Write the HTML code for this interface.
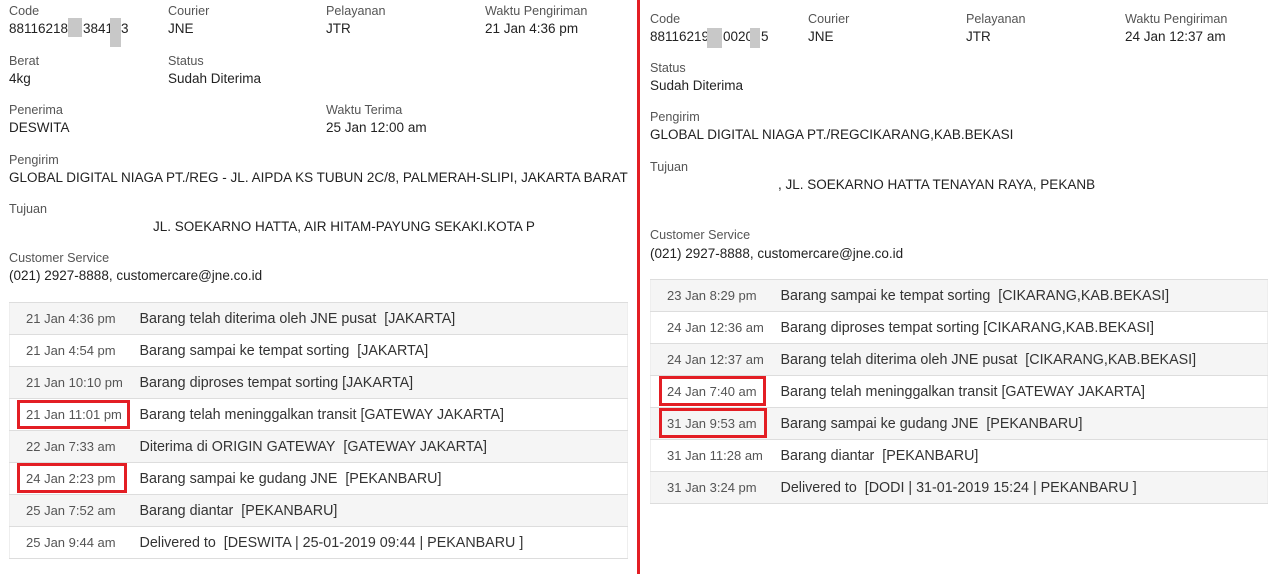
<!DOCTYPE html>
<html><head><meta charset="utf-8"><style>
*{margin:0;padding:0;box-sizing:border-box}
body{width:1280px;height:574px;background:#fff;font-family:"Liberation Sans",Arial,sans-serif;color:#333;position:relative;overflow:hidden}
.t{position:absolute;font-size:13px;line-height:16px;white-space:nowrap}
.l{color:#555;font-size:12.6px}
.v{color:#222;font-size:13.5px}
.vl{position:absolute;left:637px;top:0;width:3px;height:574px;background:#e31e24}
.g{position:absolute;background:#c8c8c8}
table{position:absolute;border-collapse:collapse;font-size:14.3px}
td{height:32px;border-top:1px solid #ddd;vertical-align:middle;white-space:nowrap;color:#333}
tr:nth-child(odd) td{background:#f5f5f5}
td.d{font-size:13px;color:#555;padding-left:16px}
.box{position:absolute;border:3px solid #e31e24}
</style></head><body>
<div class="vl"></div>

<!-- left -->
<div class="t l" style="left:9px;top:3px">Code</div>
<div class="t v" style="left:9px;top:21px">88116218</div><div class="t v" style="left:83px;top:21px">3841</div><div class="t v" style="left:121px;top:21px">3</div>
<div class="g" style="left:68px;top:18px;width:14px;height:19px"></div>
<div class="g" style="left:110px;top:18px;width:11px;height:29px"></div>
<div class="t l" style="left:168px;top:3px">Courier</div><div class="t v" style="left:168px;top:21px">JNE</div>
<div class="t l" style="left:326px;top:3px">Pelayanan</div><div class="t v" style="left:326px;top:21px">JTR</div>
<div class="t l" style="left:485px;top:3px">Waktu Pengiriman</div><div class="t v" style="left:485px;top:21px">21 Jan 4:36 pm</div>
<div class="t l" style="left:9px;top:53px">Berat</div><div class="t v" style="left:9px;top:71px">4kg</div>
<div class="t l" style="left:168px;top:53px">Status</div><div class="t v" style="left:168px;top:71px">Sudah Diterima</div>
<div class="t l" style="left:9px;top:102px">Penerima</div><div class="t v" style="left:9px;top:120px">DESWITA</div>
<div class="t l" style="left:326px;top:102px">Waktu Terima</div><div class="t v" style="left:326px;top:120px">25 Jan 12:00 am</div>
<div class="t l" style="left:9px;top:152px">Pengirim</div><div class="t v" style="left:9px;top:170px">GLOBAL DIGITAL NIAGA PT./REG - JL. AIPDA KS TUBUN 2C/8, PALMERAH-SLIPI, JAKARTA BARAT</div>
<div class="t l" style="left:9px;top:201px">Tujuan</div><div class="t v" style="left:153px;top:219px">JL. SOEKARNO HATTA, AIR HITAM-PAYUNG SEKAKI.KOTA P</div>
<div class="t l" style="left:9px;top:250px">Customer Service</div><div class="t v" style="left:9px;top:268px">(021) 2927-8888, customercare@jne.co.id</div>

<table style="left:9px;top:302px;width:619px;border-bottom:1px solid #ddd;border-left:1px solid #eee;border-right:1px solid #eee">
<col style="width:130px"><col>
<tr><td class="d">21 Jan 4:36 pm</td><td>Barang telah diterima oleh JNE pusat&nbsp; [JAKARTA]</td></tr>
<tr><td class="d">21 Jan 4:54 pm</td><td>Barang sampai ke tempat sorting&nbsp; [JAKARTA]</td></tr>
<tr><td class="d">21 Jan 10:10 pm</td><td>Barang diproses tempat sorting [JAKARTA]</td></tr>
<tr><td class="d">21 Jan 11:01 pm</td><td>Barang telah meninggalkan transit [GATEWAY JAKARTA]</td></tr>
<tr><td class="d">22 Jan 7:33 am</td><td>Diterima di ORIGIN GATEWAY&nbsp; [GATEWAY JAKARTA]</td></tr>
<tr><td class="d">24 Jan 2:23 pm</td><td>Barang sampai ke gudang JNE&nbsp; [PEKANBARU]</td></tr>
<tr><td class="d">25 Jan 7:52 am</td><td>Barang diantar&nbsp; [PEKANBARU]</td></tr>
<tr><td class="d">25 Jan 9:44 am</td><td>Delivered to&nbsp; [DESWITA | 25-01-2019 09:44 | PEKANBARU ]</td></tr>
</table>
<div class="box" style="left:17px;top:400px;width:113px;height:29px"></div>
<div class="box" style="left:17px;top:463px;width:110px;height:30px"></div>

<!-- right -->
<div class="t l" style="left:650px;top:11px">Code</div>
<div class="t v" style="left:650px;top:29px">88116219</div><div class="t v" style="left:723px;top:29px">0020</div><div class="t v" style="left:761px;top:29px">5</div>
<div class="g" style="left:707px;top:28px;width:15px;height:20px"></div>
<div class="g" style="left:750px;top:28px;width:10px;height:20px"></div>
<div class="t l" style="left:808px;top:11px">Courier</div><div class="t v" style="left:808px;top:29px">JNE</div>
<div class="t l" style="left:966px;top:11px">Pelayanan</div><div class="t v" style="left:966px;top:29px">JTR</div>
<div class="t l" style="left:1125px;top:11px">Waktu Pengiriman</div><div class="t v" style="left:1125px;top:29px">24 Jan 12:37 am</div>
<div class="t l" style="left:650px;top:60px">Status</div><div class="t v" style="left:650px;top:78px">Sudah Diterima</div>
<div class="t l" style="left:650px;top:109px">Pengirim</div><div class="t v" style="left:650px;top:127px">GLOBAL DIGITAL NIAGA PT./REGCIKARANG,KAB.BEKASI</div>
<div class="t l" style="left:650px;top:159px">Tujuan</div><div class="t v" style="left:778px;top:177px">, JL. SOEKARNO HATTA TENAYAN RAYA, PEKANB</div>
<div class="t l" style="left:650px;top:227px">Customer Service</div><div class="t v" style="left:650px;top:246px">(021) 2927-8888, customercare@jne.co.id</div>

<table style="left:650px;top:279px;width:618px;border-bottom:1px solid #ddd;border-left:1px solid #eee;border-right:1px solid #eee">
<col style="width:130px"><col>
<tr><td class="d">23 Jan 8:29 pm</td><td>Barang sampai ke tempat sorting&nbsp; [CIKARANG,KAB.BEKASI]</td></tr>
<tr><td class="d">24 Jan 12:36 am</td><td>Barang diproses tempat sorting [CIKARANG,KAB.BEKASI]</td></tr>
<tr><td class="d">24 Jan 12:37 am</td><td>Barang telah diterima oleh JNE pusat&nbsp; [CIKARANG,KAB.BEKASI]</td></tr>
<tr><td class="d">24 Jan 7:40 am</td><td>Barang telah meninggalkan transit [GATEWAY JAKARTA]</td></tr>
<tr><td class="d">31 Jan 9:53 am</td><td>Barang sampai ke gudang JNE&nbsp; [PEKANBARU]</td></tr>
<tr><td class="d">31 Jan 11:28 am</td><td>Barang diantar&nbsp; [PEKANBARU]</td></tr>
<tr><td class="d">31 Jan 3:24 pm</td><td>Delivered to&nbsp; [DODI | 31-01-2019 15:24 | PEKANBARU ]</td></tr>
</table>
<div class="box" style="left:659px;top:376px;width:107px;height:30px"></div>
<div class="box" style="left:659px;top:408px;width:108px;height:30px"></div>
</body></html>
